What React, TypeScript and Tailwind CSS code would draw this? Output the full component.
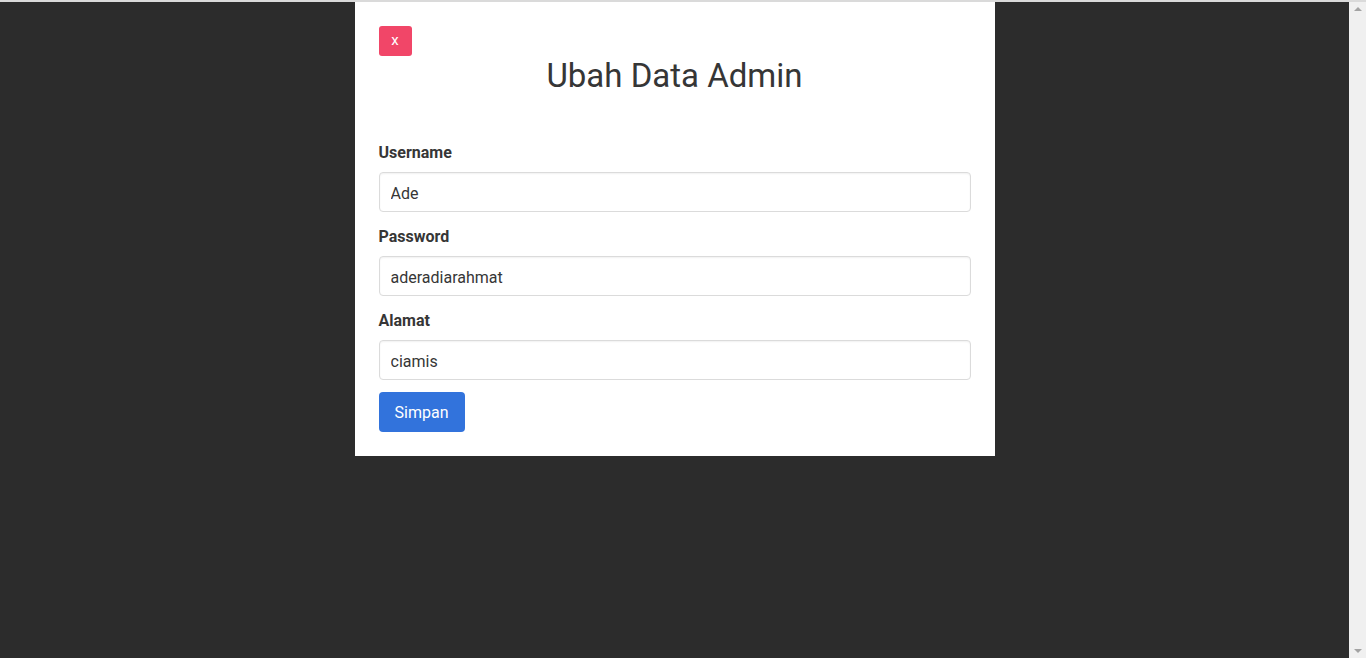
const fields = [
  { label: "Username", value: "Ade" },
  { label: "Password", value: "aderadiarahmat" },
  { label: "Alamat", value: "ciamis" },
];

const App = () => {
  return (
    <div className="flex h-screen w-full border-t-2 border-[#dadada] bg-[#2c2c2c] font-['Roboto',sans-serif] text-[#363636]">
      <div className="flex flex-1 justify-center">
        <div className="h-[454px] w-[640px] bg-white p-6">
          <button className="flex h-[30px] w-[33px] items-center justify-center rounded-[3px] bg-[#f14668] pb-[1px] text-[15px] leading-none text-white">
            x
          </button>
          <h1 className="mt-[2px] text-center text-[33px] leading-[36px] font-normal text-[#363636]">
            Ubah Data Admin
          </h1>
          <form className="mt-[46px] flex flex-col gap-3" onSubmit={(e) => e.preventDefault()}>
            {fields.map((f) => (
              <div key={f.label} className="flex flex-col gap-2">
                <label className="h-6 pt-px text-base leading-6 font-bold">{f.label}</label>
                <input
                  defaultValue={f.value}
                  className="h-10 w-full rounded border border-[#dbdbdb] px-[11px] pt-[2px] text-base text-[#363636] shadow-[inset_0_1px_2px_rgba(10,10,10,0.06)] outline-none"
                />
              </div>
            ))}
            <div>
              <button className="h-10 w-[86px] rounded bg-[#3273dc] pt-[2px] text-base text-white">Simpan</button>
            </div>
          </form>
        </div>
      </div>
      <div className="flex w-[17px] flex-col justify-between bg-[#f0f0f0] py-[5px]">
        <span className="mx-auto h-0 w-0 border-x-4 border-b-4 border-x-transparent border-b-[#a3a3a3]" />
        <span className="mx-auto h-0 w-0 border-x-4 border-t-4 border-x-transparent border-t-[#a3a3a3]" />
      </div>
    </div>
  );
};

export default App;
